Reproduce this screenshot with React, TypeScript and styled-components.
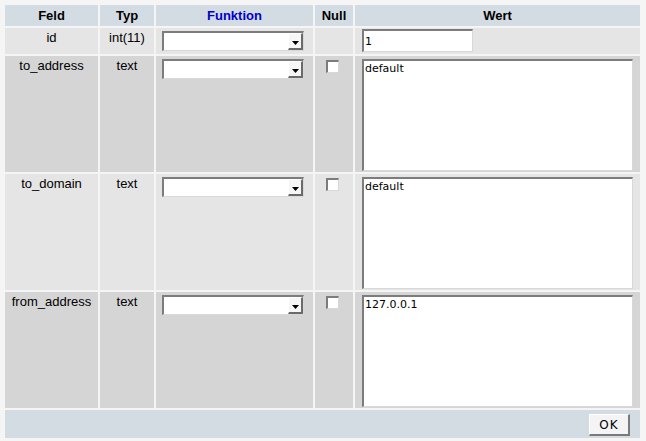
import styled, { createGlobalStyle } from "styled-components";

interface FieldRow {
  name: string;
  type: string;
  value: string;
  multiline: boolean;
  nullable: boolean;
}

const FIELDS: FieldRow[] = [
  { name: "id", type: "int(11)", value: "1", multiline: false, nullable: false },
  { name: "to_address", type: "text", value: "default", multiline: true, nullable: true },
  { name: "to_domain", type: "text", value: "default", multiline: true, nullable: true },
  { name: "from_address", type: "text", value: "127.0.0.1", multiline: true, nullable: true },
];

const COLORS = {
  page: "#f5f5f5",
  head: "#d3dce3",
  odd: "#e5e5e5",
  even: "#d5d5d5",
  link: "#0000cc",
  bevelDark: "#7c7c7c",
  bevelLight: "#d8d8d8",
};

const GlobalStyle = createGlobalStyle`
  html, body {
    margin: 0;
    padding: 0;
    background: ${COLORS.page};
  }
  body {
    font-family: "Liberation Sans", Arial, sans-serif;
    font-size: 13px;
    color: #000;
  }
`;

function SelectArrow() {
  return (
    <svg width="7" height="4" viewBox="0 0 7 4">
      <polygon points="0,0 7,0 3.5,4" fill="#000" />
    </svg>
  );
}

export default function App() {
  return (
    <>
      <GlobalStyle />
      <Page>
        <form onSubmit={(e) => e.preventDefault()}>
          <InsertTable>
            <thead>
              <tr>
                <HeadCell $width={93}>Feld</HeadCell>
                <HeadCell $width={54}>Typ</HeadCell>
                <HeadCell $width={157}>
                  <HeadLink href="#">Funktion</HeadLink>
                </HeadCell>
                <HeadCell $width={38}>Null</HeadCell>
                <HeadCell $width={285}>Wert</HeadCell>
              </tr>
            </thead>
            <tbody>
              {FIELDS.map((field, i) => (
                <tr key={field.name}>
                  <TextCell $odd={i % 2 === 0}>{field.name}</TextCell>
                  <TextCell $odd={i % 2 === 0}>{field.type}</TextCell>
                  <FunctionCell $odd={i % 2 === 0}>
                    <SelectWrap>
                      <FunctionSelect defaultValue="">
                        <option value=""></option>
                        <option value="NOW">NOW</option>
                        <option value="MD5">MD5</option>
                      </FunctionSelect>
                      <ArrowBox>
                        <SelectArrow />
                      </ArrowBox>
                    </SelectWrap>
                  </FunctionCell>
                  <NullCell $odd={i % 2 === 0}>
                    {field.nullable && <NullCheckbox type="checkbox" />}
                  </NullCell>
                  <ValueCell $odd={i % 2 === 0} $multiline={field.multiline}>
                    {field.multiline ? (
                      <ValueArea defaultValue={field.value} />
                    ) : (
                      <ValueInput type="text" defaultValue={field.value} />
                    )}
                  </ValueCell>
                </tr>
              ))}
              <tr>
                <FooterCell colSpan={5}>
                  <OkButton type="submit">OK</OkButton>
                </FooterCell>
              </tr>
            </tbody>
          </InsertTable>
        </form>
      </Page>
    </>
  );
}

const Page = styled.div`
  padding: 3px;
`;

const InsertTable = styled.table`
  border-collapse: separate;
  border-spacing: 2px;
  table-layout: fixed;
  width: 639px;

  td,
  th {
    box-sizing: border-box;
  }
`;

const HeadCell = styled.th<{ $width: number }>`
  width: ${({ $width }) => $width}px;
  background: ${COLORS.head};
  height: 21px;
  padding: 0;
  font-weight: bold;
  font-size: 13px;
  text-align: center;
  vertical-align: middle;
`;

const HeadLink = styled.a`
  color: ${COLORS.link};
  text-decoration: none;
`;

const BodyCell = styled.td<{ $odd: boolean }>`
  background: ${({ $odd }) => ($odd ? COLORS.odd : COLORS.even)};
  vertical-align: top;
  padding: 0;
`;

const TextCell = styled(BodyCell)`
  text-align: center;
  padding-top: 2px;
  line-height: 15px;
`;

const FunctionCell = styled(BodyCell)`
  padding: 3px 0 0 6px;
`;

const SelectWrap = styled.div`
  position: relative;
  box-sizing: border-box;
  width: 142px;
  height: 20px;
  background: #fff;
  border-style: solid;
  border-width: 2px 1px 1px 2px;
  border-color: ${COLORS.bevelDark} ${COLORS.bevelLight} ${COLORS.bevelLight}
    ${COLORS.bevelDark};
`;

const FunctionSelect = styled.select`
  appearance: none;
  display: block;
  width: 100%;
  height: 100%;
  border: 0;
  padding: 0 16px 0 2px;
  background: transparent;
  font-family: "DejaVu Sans", sans-serif;
  font-size: 11px;
  outline: none;
`;

const ArrowBox = styled.span`
  position: absolute;
  top: 0;
  right: 0;
  bottom: 0;
  width: 15px;
  box-sizing: border-box;
  display: flex;
  align-items: center;
  justify-content: center;
  padding-top: 3px;
  background: #f6f6f6;
  border-style: solid;
  border-width: 1px 2px 2px 1px;
  border-color: #ffffff #6a6a6a #6a6a6a #ffffff;
  pointer-events: none;
`;

const NullCell = styled(BodyCell)`
  padding: 4px 0 0 11px;
`;

const NullCheckbox = styled.input`
  appearance: none;
  display: block;
  box-sizing: border-box;
  width: 13px;
  height: 13px;
  margin: 0;
  background: #fff;
  border-style: solid;
  border-width: 2px 1px 1px 2px;
  border-color: ${COLORS.bevelDark} ${COLORS.bevelLight} ${COLORS.bevelLight}
    ${COLORS.bevelDark};

  &:checked {
    background: #fff radial-gradient(circle, #000 35%, transparent 40%);
  }
`;

const ValueCell = styled(BodyCell)<{ $multiline: boolean }>`
  padding: ${({ $multiline }) => ($multiline ? "3px 7px 1px" : "1px 7px 2px")};
`;

const bevel = `
  box-sizing: border-box;
  background: #fff;
  border-style: solid;
  border-width: 2px 1px 1px 2px;
  border-color: ${COLORS.bevelDark} ${COLORS.bevelLight} ${COLORS.bevelLight} ${COLORS.bevelDark};
  outline: none;
  margin: 0;
  color: #000;
`;

const ValueInput = styled.input`
  ${bevel}
  display: block;
  width: 111px;
  height: 23px;
  padding: 0 1px;
  font-family: "DejaVu Sans", sans-serif;
  font-size: 11px;
`;

const ValueArea = styled.textarea`
  ${bevel}
  display: block;
  width: 100%;
  height: 112px;
  padding: 1px 1px;
  resize: none;
  font-family: "DejaVu Sans", sans-serif;
  font-size: 11px;
  line-height: 13px;
`;

const FooterCell = styled.td`
  background: ${COLORS.head};
  text-align: right;
  padding: 4px 10px 2px 0;
  line-height: 0;
`;

const OkButton = styled.button`
  box-sizing: border-box;
  width: 41px;
  height: 22px;
  padding: 0;
  margin: 0;
  background: #f4f4f4;
  border-style: solid;
  border-width: 1px 2px 2px 1px;
  border-color: #ffffff #7a7a7a #7a7a7a #ffffff;
  font-family: "DejaVu Sans", sans-serif;
  font-size: 12px;
  letter-spacing: 1px;
  color: #000;
  cursor: pointer;
`;
